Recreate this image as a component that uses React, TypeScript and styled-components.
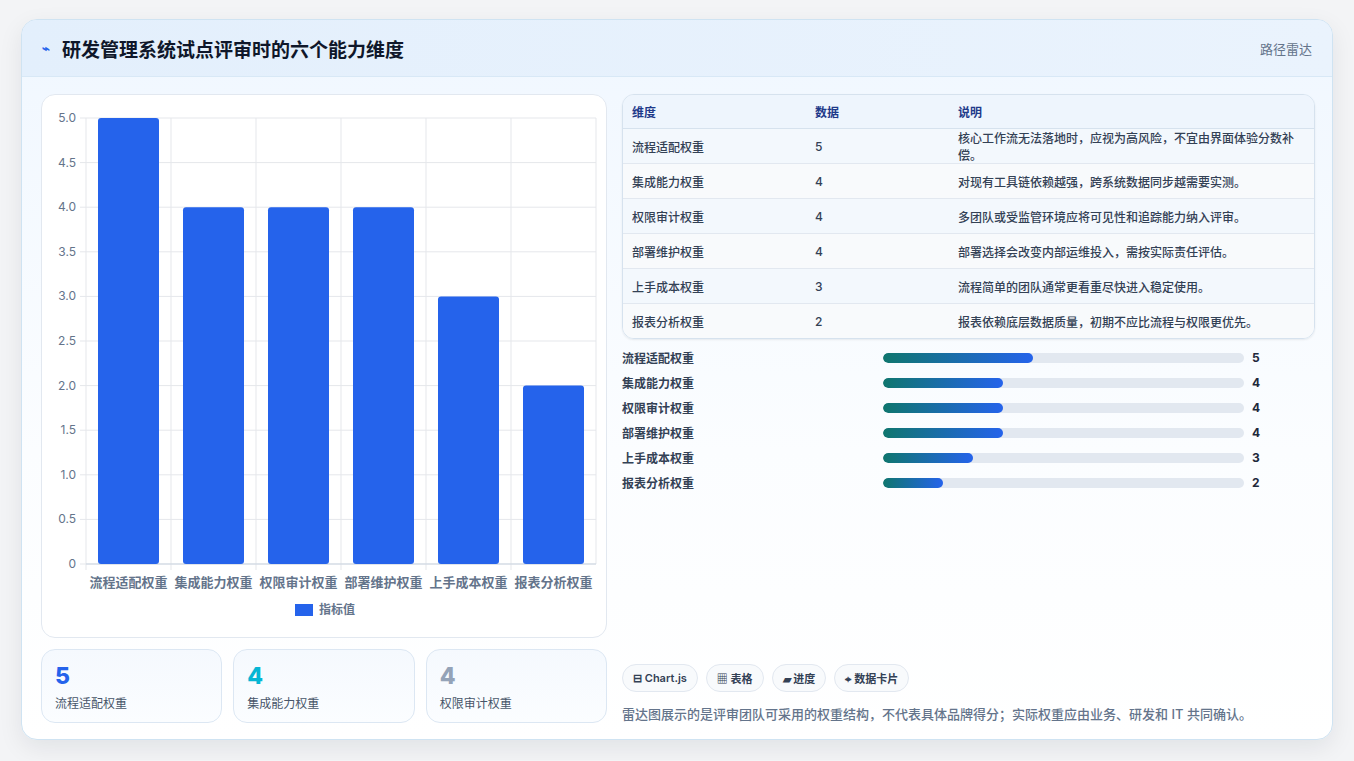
import styled, { createGlobalStyle } from "styled-components"

const data = [
  { name: "流程适配权重", v: 5, note: "核心工作流无法落地时，应视为高风险，不宜由界面体验分数补偿。" },
  { name: "集成能力权重", v: 4, note: "对现有工具链依赖越强，跨系统数据同步越需要实测。" },
  { name: "权限审计权重", v: 4, note: "多团队或受监管环境应将可见性和追踪能力纳入评审。" },
  { name: "部署维护权重", v: 4, note: "部署选择会改变内部运维投入，需按实际责任评估。" },
  { name: "上手成本权重", v: 3, note: "流程简单的团队通常更看重尽快进入稳定使用。" },
  { name: "报表分析权重", v: 2, note: "报表依赖底层数据质量，初期不应比流程与权限更优先。" },
]

const Global = createGlobalStyle`
  body {
    margin: 0;
    background: #f3f4f6;
    font-family: Inter, "Noto Sans CJK SC", sans-serif;
    color: #1e293b;
  }
`

const Chart = () => {
  // plot area inside svg: x 44..554, y 24..470
  const W = 566, left = 44, right = 554, top = 23, bottom = 469
  const step = (right - left) / 6
  const ys = [5, 4.5, 4, 3.5, 3, 2.5, 2, 1.5, 1, 0.5, 0]
  const y = (v: number) => bottom - (v / 5) * (bottom - top)
  return (
    <svg width={W} height={530} style={{ display: "block" }}>
      {ys.map((t) => (
        <g key={t}>
          <line x1={left - 6} x2={right} y1={y(t)} y2={y(t)} stroke="#e5e7eb" />
          <text x={left - 10} y={y(t) + 4} textAnchor="end" fontSize="12" fill="#64748b">
            {t === 0 ? "0" : t.toFixed(1)}
          </text>
        </g>
      ))}
      {data.map((_, i) => (
        <line key={i} x1={left + step * i} x2={left + step * i} y1={top} y2={bottom + 6} stroke="#e5e7eb" />
      ))}
      <line x1={right} x2={right} y1={top} y2={bottom} stroke="#e5e7eb" />
      <line x1={left} x2={right} y1={bottom} y2={bottom} stroke="#cbd5e1" />
      {data.map((d, i) => (
        <g key={d.name}>
          <rect x={left + step * i + 12} y={y(d.v)} width={step - 24} height={bottom - y(d.v)} rx="3" fill="#2563eb" />
          <text x={left + step * i + step / 2} y={bottom + 23} textAnchor="middle" fontSize="13" fontWeight="600" fill="#64748b">
            {d.name}
          </text>
        </g>
      ))}
      <rect x={253} y={509} width={18} height={12} fill="#2563eb" />
      <text x={277} y={519} fontSize="12" fontWeight="600" fill="#64748b">指标值</text>
    </svg>
  )
}

const App = () => {
  return (
    <Page>
      <Global />
      <Card>
        <Header>
          <Title>
            <Spark>⌁</Spark>研发管理系统试点评审时的六个能力维度
          </Title>
          <Tag>路径雷达</Tag>
        </Header>
        <Body>
          <Left>
            <ChartBox>
              <Chart />
            </ChartBox>
            <Kpis>
              <Kpi>
                <KpiNum color="#2563eb">5</KpiNum>
                <KpiLabel>流程适配权重</KpiLabel>
              </Kpi>
              <Kpi>
                <KpiNum color="#06b6d4">4</KpiNum>
                <KpiLabel>集成能力权重</KpiLabel>
              </Kpi>
              <Kpi>
                <KpiNum color="#94a3b8">4</KpiNum>
                <KpiLabel>权限审计权重</KpiLabel>
              </Kpi>
            </Kpis>
          </Left>
          <Right>
            <Table>
              <thead>
                <tr>
                  <Th style={{ width: 165 }}>维度</Th>
                  <Th style={{ width: 125 }}>数据</Th>
                  <Th>说明</Th>
                </tr>
              </thead>
              <tbody>
                {data.map((d, i) => (
                  <Tr key={d.name} odd={i % 2 === 0}>
                    <Td>{d.name}</Td>
                    <Td>{d.v}</Td>
                    <Td>{d.note}</Td>
                  </Tr>
                ))}
              </tbody>
            </Table>
            <Bars>
              {data.map((d) => (
                <BarRow key={d.name}>
                  <BarLabel>{d.name}</BarLabel>
                  <Track>
                    <Fill style={{ width: `${(d.v / 12) * 100}%` }} />
                  </Track>
                  <BarVal>{d.v}</BarVal>
                </BarRow>
              ))}
            </Bars>
            <Footer>
              <Chips>
                <Chip>⊟ Chart.js</Chip>
                <Chip>▦ 表格</Chip>
                <Chip>▰ 进度</Chip>
                <Chip>⌖ 数据卡片</Chip>
              </Chips>
              <Note>雷达图展示的是评审团队可采用的权重结构，不代表具体品牌得分；实际权重应由业务、研发和 IT 共同确认。</Note>
            </Footer>
          </Right>
        </Body>
      </Card>
    </Page>
  )
}

export default App

const Page = styled.div`
  padding: 19px 20px 20px 21px;
`

const Card = styled.div`
  width: 1312px;
  height: 721px;
  box-sizing: border-box;
  border: 1px solid #cfe3f2;
  border-radius: 16px;
  background: linear-gradient(180deg, #f0f7ff 0%, #fbfdff 60%, #ffffff 100%);
  box-shadow: 0 8px 24px rgba(15, 23, 42, 0.08);
  overflow: hidden;
  display: flex;
  flex-direction: column;
`

const Header = styled.div`
  height: 56px;
  flex-shrink: 0;
  display: flex;
  align-items: center;
  justify-content: space-between;
  padding: 0 20px;
  background: linear-gradient(90deg, #e3effc, #eaf3fd);
  border-bottom: 1px solid #d8e8f6;
`

const Title = styled.div`
  font-size: 19px;
  font-weight: 700;
  color: #0f172a;
  display: flex;
  align-items: center;
`

const Spark = styled.span`
  color: #2563eb;
  font-size: 13px;
  margin-right: 12px;
`

const Tag = styled.div`
  font-size: 13px;
  color: #64748b;
`

const Body = styled.div`
  flex: 1;
  display: grid;
  grid-template-columns: 566px 693px;
  gap: 15px;
  padding: 17px 19px 18px 19px;
`

const Left = styled.div`
  display: flex;
  flex-direction: column;
  gap: 11px;
`

const ChartBox = styled.div`
  height: 544px;
  box-sizing: border-box;
  border: 1px solid #e2e8f0;
  border-radius: 14px;
  background: #fff;
  overflow: hidden;
`

const Kpis = styled.div`
  display: grid;
  grid-template-columns: repeat(3, 1fr);
  gap: 11px;
`

const Kpi = styled.div`
  height: 74px;
  box-sizing: border-box;
  border: 1px solid #dce7f3;
  border-radius: 14px;
  background: linear-gradient(180deg, #f5f9fe, #fbfdff);
  padding: 12px 13px;
`

const KpiNum = styled.div<{ color: string }>`
  font-size: 23px;
  font-weight: 800;
  color: ${(p) => p.color};
  line-height: 28px;
`

const KpiLabel = styled.div`
  font-size: 12px;
  color: #475569;
  margin-top: 4px;
`

const Right = styled.div`
  display: flex;
  flex-direction: column;
`

const Table = styled.table`
  width: 100%;
  border-collapse: separate;
  border-spacing: 0;
  border: 1px solid #d6e2ee;
  border-radius: 12px;
  overflow: hidden;
  font-size: 12px;
  box-shadow: 0 1px 2px rgba(15, 23, 42, 0.08);
`

const Th = styled.th`
  text-align: left;
  font-weight: 600;
  color: #1e3a8a;
  height: 33px;
  padding: 0 9px;
  background: #eef5fd;
  border-bottom: 1px solid #d6e2ee;
`

const Tr = styled.tr<{ odd: boolean }>`
  background: ${(p) => (p.odd ? "#f3f8fd" : "#f8fafc")};
  &:not(:last-child) td {
    border-bottom: 1px solid #e2e8f0;
  }
`

const Td = styled.td`
  height: 34px;
  padding: 0 9px;
  color: #334155;
  font-weight: 500;
`

const Bars = styled.div`
  margin-top: 10px;
  display: flex;
  flex-direction: column;
  gap: 9px;
`

const BarRow = styled.div`
  display: grid;
  grid-template-columns: 261px 361px auto;
  align-items: center;
  height: 16px;
`

const BarLabel = styled.div`
  font-size: 12px;
  font-weight: 600;
  color: #334155;
`

const Track = styled.div`
  height: 10px;
  border-radius: 5px;
  background: #e2e8f0;
  overflow: hidden;
`

const Fill = styled.div`
  height: 100%;
  border-radius: 5px;
  background: linear-gradient(90deg, #0f766e, #2563eb);
`

const BarVal = styled.div`
  padding-left: 8px;
  font-size: 12px;
  font-weight: 700;
  color: #1e293b;
`

const Footer = styled.div`
  margin-top: auto;
  display: flex;
  flex-direction: column;
  gap: 12px;
`

const Chips = styled.div`
  display: flex;
  gap: 8px;
`

const Chip = styled.div`
  height: 28px;
  box-sizing: border-box;
  padding: 0 10px;
  border: 1px solid #e2e8f0;
  border-radius: 14px;
  background: #f8fafc;
  display: flex;
  align-items: center;
  font-size: 11px;
  font-weight: 600;
  color: #334155;
`

const Note = styled.div`
  font-size: 13px;
  color: #64748b;
  font-weight: 500;
`
